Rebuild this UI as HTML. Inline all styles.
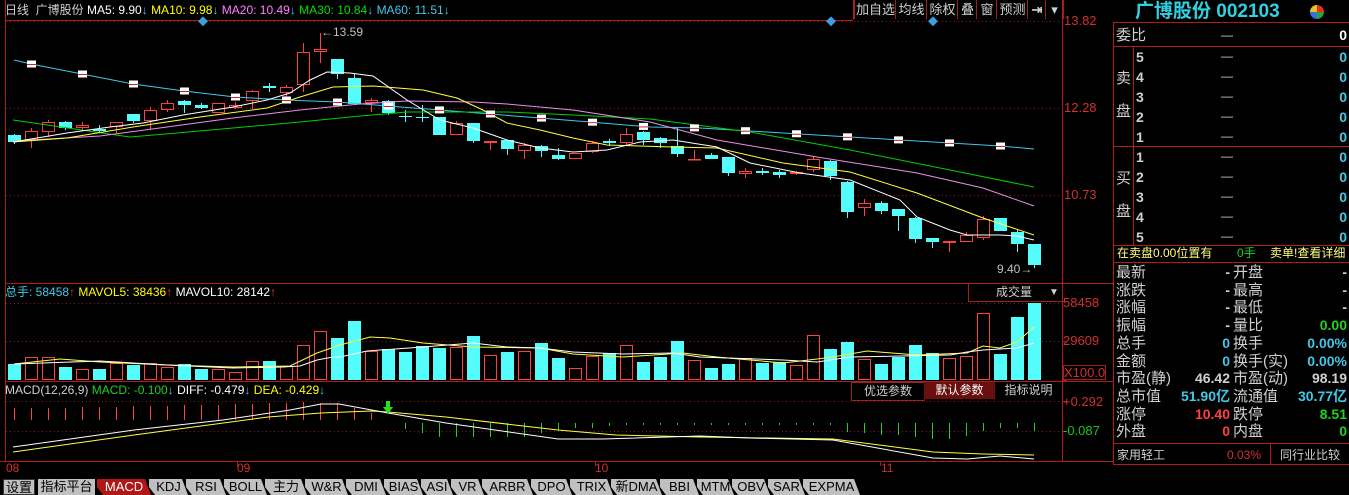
<!DOCTYPE html>
<html><head><meta charset="utf-8">
<style>
html,body{margin:0;padding:0;background:#000;width:1349px;height:495px;overflow:hidden}
body{position:relative;font-family:"Liberation Sans","Noto Sans CJK SC",sans-serif;}
.t{position:absolute;white-space:nowrap;font-size:12px;line-height:14px}
#rp .t{font-family:"Liberation Sans","Noto Sans CJK SC",sans-serif}
.lab{color:#d0d0d0;font-size:15px;line-height:17px}
.num{font-weight:bold;font-size:14px;line-height:17px;text-align:right}
.tb{position:absolute;top:0;height:19px;border-left:1px solid #a02020;color:#d0d0d0;font-size:13px;line-height:19px;text-align:center;font-family:"Liberation Sans","Noto Sans CJK SC",sans-serif}
.tab{position:absolute;top:479px;height:16px;background:#c0c0c0;color:#000;font-size:13px;line-height:16px;text-align:center;clip-path:polygon(0 0,calc(100% - 6px) 0,100% 100%,6px 100%, 0 50%)}
</style></head><body>
<svg id="sv" width="1349" height="495" style="position:absolute;left:0;top:0" xmlns="http://www.w3.org/2000/svg"></svg>

<div class="t" style="left:5px;top:3px;color:#d0d0d0">日线&nbsp; 广博股份 <span style="color:#fff">MA5: 9.90<span style="color:#40c8e8">↓</span></span> <span style="color:#ffff00">MA10: 9.98<span style="color:#40c8e8">↓</span></span> <span style="color:#ff80ff">MA20: 10.49<span style="color:#40c8e8">↓</span></span> <span style="color:#00e000">MA30: 10.84<span style="color:#40c8e8">↓</span></span> <span style="color:#40c8e8">MA60: 11.51↓</span></div>
<div class="t" style="left:321px;top:25px;color:#c0c0c0">←13.59</div>
<div class="t" style="left:997px;top:262px;color:#c0c0c0">9.40→</div>

<div class="tb" style="left:854px;width:41px">加自选</div>
<div class="tb" style="left:895px;width:31px">均线</div>
<div class="tb" style="left:926px;width:31px">除权</div>
<div class="tb" style="left:957px;width:19px">叠</div>
<div class="tb" style="left:976px;width:20px">窗</div>
<div class="tb" style="left:996px;width:31px">预测</div>
<div class="tb" style="left:1027px;width:18px;font-weight:bold">⇥</div>
<div class="tb" style="left:1045px;width:17px;border-right:1px solid #a02020">▾</div>

<div class="t" style="left:1064px;top:14px;color:#d03030;font-size:13px">13.82</div>
<div class="t" style="left:1064px;top:101px;color:#d03030;font-size:13px">12.28</div>
<div class="t" style="left:1064px;top:188px;color:#d03030;font-size:13px">10.73</div>
<div class="t" style="left:1063px;top:296px;color:#d03030;font-size:13px">58458</div>
<div class="t" style="left:1063px;top:334px;color:#d03030;font-size:13px">29609</div>
<div class="t" style="left:1063px;top:365px;color:#d03030;font-size:13px;border:1px solid #a02020;line-height:13px">X100.0</div>
<div class="t" style="left:1063px;top:395px;color:#d03030;font-size:13px">+0.292</div>
<div class="t" style="left:1063px;top:424px;color:#20c020;font-size:13px">-0.087</div>

<div class="t" style="left:5px;top:285px;color:#40c8e8">总手: 58458<span style="color:#ff3030">↑</span> <span style="color:#ffff00">MAVOL5: 38436<span style="color:#ff3030">↑</span></span> <span style="color:#fff">MAVOL10: 28142<span style="color:#ff3030">↑</span></span></div>
<div class="t" style="left:968px;top:284px;width:93px;height:17px;border-left:1px solid #a02020;border-bottom:1px solid #a02020;color:#d0d0d0;line-height:17px;font-size:12px"><span style="position:absolute;left:27px">成交量</span><span style="position:absolute;left:80px;font-size:10px">▼</span></div>

<div class="t" style="left:5px;top:383px;color:#d0d0d0">MACD(12,26,9) <span style="color:#20d020">MACD: -0.100<span style="color:#40c8e8">↓</span></span> <span style="color:#fff">DIFF: -0.479<span style="color:#40c8e8">↓</span></span> <span style="color:#ffff00">DEA: -0.429<span style="color:#40c8e8">↓</span></span></div>
<div class="t" style="left:851px;top:382px;width:72px;height:17px;border:1px solid #a02020;color:#d0d0d0;text-align:center;line-height:17px">优选参数</div>
<div class="t" style="left:924px;top:382px;width:71px;height:17px;background:#6a0e0e;color:#fff;text-align:center;line-height:17px">默认参数</div>
<div class="t" style="left:996px;top:382px;width:65px;height:17px;color:#d0d0d0;text-align:center;line-height:17px">指标说明</div>

<div class="t" style="left:6px;top:461px;color:#d03030">08</div>
<div class="t" style="left:237px;top:461px;color:#d03030">09</div>
<div class="t" style="left:595px;top:461px;color:#d03030">10</div>
<div class="t" style="left:881px;top:461px;color:#d03030">11</div>

<div class="tab" style="left:3px;width:32px;clip-path:none;border:1px solid #333;box-sizing:border-box">设置</div>
<div class="tab" style="left:38px;width:57px;clip-path:none">指标平台</div>
<div class="tab" style="left:97px;width:54px;background:#b01818;color:#fff">MACD</div>
<div class="tab" style="left:149px;width:39px">KDJ</div>
<div class="tab" style="left:186px;width:40px">RSI</div>
<div class="tab" style="left:224px;width:43px">BOLL</div>
<div class="tab" style="left:265px;width:42px">主力</div>
<div class="tab" style="left:305px;width:43px">W&amp;R</div>
<div class="tab" style="left:346px;width:40px">DMI</div>
<div class="tab" style="left:384px;width:39px">BIAS</div>
<div class="tab" style="left:421px;width:32px">ASI</div>
<div class="tab" style="left:451px;width:33px">VR</div>
<div class="tab" style="left:482px;width:51px">ARBR</div>
<div class="tab" style="left:531px;width:41px">DPO</div>
<div class="tab" style="left:570px;width:43px">TRIX</div>
<div class="tab" style="left:611px;width:51px">新DMA</div>
<div class="tab" style="left:660px;width:39px">BBI</div>
<div class="tab" style="left:697px;width:37px">MTM</div>
<div class="tab" style="left:732px;width:38px">OBV</div>
<div class="tab" style="left:768px;width:37px">SAR</div>
<div class="tab" style="left:803px;width:57px">EXPMA</div>

<div id="rp">
<div class="t" style="left:1135px;top:1px;color:#30d0e0;font-size:19px;line-height:22px;font-weight:bold">广博股份 002103</div>
<div style="position:absolute;left:1310px;top:5px;width:14px;height:14px;border-radius:50%;background:conic-gradient(#e03020 0 25%,#30a030 25% 50%,#3070e0 50% 75%,#f0c020 75%)"></div>
<div class="t lab" style="left:1116px;top:27px">委比</div>
<div class="t lab" style="left:1116px;top:70px">卖</div>
<div class="t lab" style="left:1116px;top:103px">盘</div>
<div class="t lab" style="left:1116px;top:170px">买</div>
<div class="t lab" style="left:1116px;top:203px">盘</div>
<div id="ob"></div>
<div class="t" style="left:1117px;top:246px;color:#ffff80;font-size:12px">在卖盘0.00位置有</div>
<div class="t" style="left:1237px;top:246px;color:#20d020;font-size:12px">0手</div>
<div class="t" style="left:1270px;top:246px;color:#ffff80;font-size:12px">卖单!查看详细</div>
<div id="qt"></div>
<div class="t" style="left:1117px;top:448px;color:#d0d0d0;font-size:12px">家用轻工</div>
<div class="t" style="left:1227px;top:448px;color:#d03030;font-size:12px">0.03%</div>
<div class="t" style="left:1280px;top:448px;color:#d0d0d0;font-size:12px">同行业比较</div>
</div>

<script>
const S=document.getElementById('sv');let h='';
const R='#b01c1c';
function line(x1,y1,x2,y2,c,w,d){h+=`<line x1="${x1}" y1="${y1}" x2="${x2}" y2="${y2}" stroke="${c}" stroke-width="${w||1}" ${d?'stroke-dasharray="'+d+'"':''}/>`}
function pl(p,c){h+=`<polyline fill="none" stroke="${c}" stroke-width="1" points="${p.map(a=>a.join(',')).join(' ')}"/>`}
line(5.5,0,5.5,462,R);line(1062.5,0,1062.5,462,R);line(1113.5,22,1113.5,465,R);
line(5,283.5,1113,283.5,R);line(5,381.5,1113,381.5,R);line(0,461.5,1113,461.5,R);line(5,20.5,853,20.5,R);
line(853.5,0,853.5,20,R);
[21,108,195].forEach(y=>line(6,y+.5,1062,y+.5,'#8a1a1a',1,'1 3'));
[303,341].forEach(y=>line(6,y+.5,1062,y+.5,'#8a1a1a',1,'1 3'));
[401,431].forEach(y=>line(6,y+.5,1062,y+.5,'#8a1a1a',1,'1 3'));
[237,595,880].forEach(x=>line(x+.5,462,x+.5,466,R));
[301,341,380,401,431].forEach(y=>line(1062,y+.5,1067,y+.5,R));
line(1113,46.5,1349,46.5,R);line(1113,146.5,1349,146.5,R);line(1113,245.5,1349,245.5,R);line(1113,262.5,1349,262.5,R);
line(1113,443.5,1349,443.5,R);line(1113,464.5,1349,464.5,R);line(1133.5,46,1133.5,245,R);line(1270.5,444,1270.5,464,R);line(1113,22.5,1349,22.5,R);
[203,831,933].forEach(x=>h+=`<rect x="${x-4}" y="18" width="7" height="7" fill="#3aa0e0" transform="rotate(45 ${x} 22)"/>`);
const C=[[142,135,134,144,0],[140,131,128,148,1],[132,122,120,137,1],[128,122,121,130,0],[128,125,122,130,1],[129,131,125,133,0],[127,122,122,133,1],[114,121,114,123,0],[121,110,107,130,1],[110,103,100,112,1],[101,105,100,113,0],[105,108,103,109,0],[113,103,103,113,1],[108,105,102,109,1],[101,91,90,109,1],[86,88,83,92,0],[93,87,85,99,1],[85,52,43,92,1],[52,49,33,63,1],[59,74,59,79,0],[78,104,74,105,0],[103,100,98,112,1],[101,113,100,115,0],[116,117,110,122,0],[117,118,105,122,0],[117,135,117,135,0],[135,123,121,135,1],[123,141,123,143,0],[143,141,141,150,1],[140,149,140,155,0],[151,145,143,159,1],[146,151,145,157,0],[155,159,148,160,0],[159,153,153,159,1],[152,143,141,153,1],[141,143,139,146,0],[143,134,128,145,1],[132,140,131,145,0],[138,143,137,148,0],[146,154,128,157,0],[159,160,150,160,1],[155,159,153,159,0],[157,173,157,176,0],[174,171,168,178,1],[171,173,168,175,0],[172,175,170,178,0],[174,172,171,175,1],[170,159,156,172,1],[161,176,160,180,0],[182,212,181,218,0],[208,203,199,216,1],[203,211,201,214,0],[209,216,209,231,0],[218,239,217,243,0],[238,242,238,248,0],[243,241,241,252,1],[242,235,232,242,1],[238,219,216,240,1],[218,231,218,231,0],[232,244,229,252,0],[244,265,244,268,0]];
const CY='#54fcfc',RD='#ff4040';
C.forEach((c,i)=>{const x=14+17*i;const top=Math.min(c[0],c[1]),bot=Math.max(c[0],c[1]),hgt=Math.max(bot-top,1);
 if(c[4]){line(x+.5,c[2],x+.5,top,RD);line(x+.5,bot,x+.5,c[3],RD);h+=`<rect x="${x-5.5}" y="${top+.5}" width="12" height="${Math.max(hgt-1,0.5)}" fill="none" stroke="${RD}"/>`}
 else{line(x+.5,c[2],x+.5,c[3],CY);h+=`<rect x="${x-6}" y="${top}" width="13" height="${hgt}" fill="${CY}"/>`}
});
const M60=[[14,60],[31,64],[82,74],[133,84],[184,91],[235,97],[286,100],[337,102],[388,106],[440,110],[490,114],[540,118],[590,122],[650,127],[700,128],[750,131],[800,134],[850,137],[900,140],[950,143],[1000,146],[1034,149]];
pl(M60,'#40c8e8');
pl([[13,120],[130,137],[177,133],[233,128],[300,122],[360,116],[407,112],[507,112],[573,115],[650,119],[750,132],[850,150],[950,170],[1034,187]],'#00d000');
pl([[13,141],[100,136],[167,127],[233,118],[300,110],[360,104],[407,101],[473,102],[507,104],[573,110],[650,122],[717,140],[817,157],[917,173],[983,188],[1034,206]],'#e890e8');
pl([[13,142],[67,138],[133,127],[200,117],[267,108],[300,97],[333,87],[373,86],[423,90],[457,98],[483,110],[507,123],[540,130],[573,138],[607,145],[673,147],[717,148],[783,163],[850,172],[917,193],[983,218],[1034,235]],'#ffff40');
pl([[13,142],[67,133],[110,127],[143,123],[183,115],[233,107],[267,100],[290,93],[310,80],[327,72],[350,73],[373,76],[407,100],[440,120],[473,128],[507,140],[540,148],[573,152],[607,150],[640,142],[673,140],[717,147],[750,163],[800,173],[850,180],[900,200],[917,217],[950,230],[967,235],[1000,235],[1017,236],[1034,240]],'#ffffff');
function yAt(p,x){for(let k=0;k<p.length-1;k++){if(x>=p[k][0]&&x<=p[k+1][0]){const t=(x-p[k][0])/(p[k+1][0]-p[k][0]);return p[k][1]+t*(p[k+1][1]-p[k][1])}}return p[p.length-1][1]}
for(let x=31;x<=1000;x+=51){const y=yAt(M60,x);h+=`<rect x="${x-4}" y="${y-3.5}" width="9" height="7" fill="#fff"/>`;line(x-4,y+.5,x+5,y+.5,'#d02020')}
const V=[364,357,357,367,369,369,363,365,363,367,364,369,369,372,361,361,366,345,331,338,321,351,349,352,346,348,347,336,355,352,351,343,358,368,356,353,345,362,357,341,360,368,364,358,363,362,365,335,349,342,359,364,357,345,353,358,356,313,354,317,303];
V.forEach((t,i)=>{const x=14+17*i;if(C[i][4])h+=`<rect x="${x-5.5}" y="${t+.5}" width="12" height="${380-t-1}" fill="none" stroke="${RD}"/>`;else h+=`<rect x="${x-6}" y="${t}" width="13" height="${380-t}" fill="${CY}"/>`});
pl([[14,364],[60,359],[100,362],[167,365],[233,367],[290,366],[317,353],[340,345],[370,337],[390,338],[423,343],[473,347],[540,348],[573,354],[623,357],[683,353],[717,357],[750,360],[783,363],[817,359],[833,357],[867,351],[917,355],[967,353],[983,346],[1000,348],[1017,342],[1034,327]],'#ffff40');
pl([[14,364],[100,361],[167,365],[233,368],[283,367],[300,366],[317,360],[333,357],[340,357],[367,351],[423,347],[473,343],[507,347],[540,348],[573,352],[623,354],[673,353],[700,357],[783,360],[817,362],[850,357],[950,355],[967,352],[983,350],[1017,348],[1034,343]],'#ffffff');
const rt=[408,408,408,408,407,407,407,406,406,406,405,405,405,404,404,403,403,402,403,403,408,413];
rt.forEach((t,i)=>{const x=14+17*i;line(x+.5,t,x+.5,420,'#ff4040')});
const gb={23:429,24:433,25:437,26:437,27:437,28:437,29:437,30:437,31:433,32:430,33:428,34:428,35:426,36:425};
for(let i=23;i<61;i++){const x=14+17*i;let b=gb[i]||425;
 const z=[432,433,435,435,437,439,439,436,431,428,428,431];if(i>=49)b=z[i-49];
 line(x+.5,423,x+.5,b,'#20d020')}
pl([[13,452],[134,435],[268,417],[321,413],[371,411],[388,412],[446,417],[558,430],[616,435],[700,437],[833,439],[933,452],[983,454],[1034,455]],'#ffff40');
pl([[13,447],[134,430],[223,420],[290,410],[321,404],[339,404],[388,413],[446,423],[558,439],[603,439],[700,436],[750,438],[833,440],[933,458],[967,459],[1000,456],[1034,459]],'#ffffff');
h+=`<path d="M386 401 h4 v6 h3 l-5 7 l-5 -7 h3z" fill="#20e020"/>`;
S.innerHTML=h;
let ob='';
[5,4,3,2,1].forEach((n,k)=>{const y=49+k*20;ob+=`<div class="t num" style="left:1136px;top:${y}px;color:#d0d0d0;text-align:left">${n}</div><div class="t" style="left:1221px;top:${y}px;color:#d0d0d0">—</div><div class="t num" style="left:1300px;width:47px;top:${y}px;color:#40c8e8">0</div>`});
[1,2,3,4,5].forEach((n,k)=>{const y=149+k*20;ob+=`<div class="t num" style="left:1136px;top:${y}px;color:#d0d0d0;text-align:left">${n}</div><div class="t" style="left:1221px;top:${y}px;color:#d0d0d0">—</div><div class="t num" style="left:1300px;width:47px;top:${y}px;color:#40c8e8">0</div>`});
ob+=`<div class="t" style="left:1221px;top:28px;color:#d0d0d0">—</div><div class="t num" style="left:1300px;width:47px;top:27px;color:#fff">0</div>`;
document.getElementById('ob').innerHTML=ob;
const Q=[['最新','-','#d0d0d0','开盘','-','#d0d0d0'],['涨跌','-','#d0d0d0','最高','-','#d0d0d0'],['涨幅','-','#d0d0d0','最低','-','#d0d0d0'],['振幅','-','#d0d0d0','量比','0.00','#20d020'],['总手','0','#40c8e8','换手','0.00%','#40c8e8'],['金额','0','#40c8e8','换手(实)','0.00%','#40c8e8'],['市盈(静)','46.42','#d0d0d0','市盈(动)','98.19','#d0d0d0'],['总市值','51.90亿','#40c8e8','流通值','30.77亿','#40c8e8'],['涨停','10.40','#ff4040','跌停','8.51','#20d020'],['外盘','0','#ff4040','内盘','0','#20d020']];
let q='';Q.forEach((r,k)=>{const y=264+k*17.7;
q+=`<div class="t lab" style="left:1116px;top:${y}px">${r[0]}</div><div class="t num" style="left:1180px;width:50px;top:${y}px;color:${r[2]}">${r[1]}</div><div class="t lab" style="left:1233px;top:${y}px">${r[3]}</div><div class="t num" style="left:1280px;width:67px;top:${y}px;color:${r[5]}">${r[4]}</div>`});
document.getElementById('qt').innerHTML=q;
</script>
</body></html>
